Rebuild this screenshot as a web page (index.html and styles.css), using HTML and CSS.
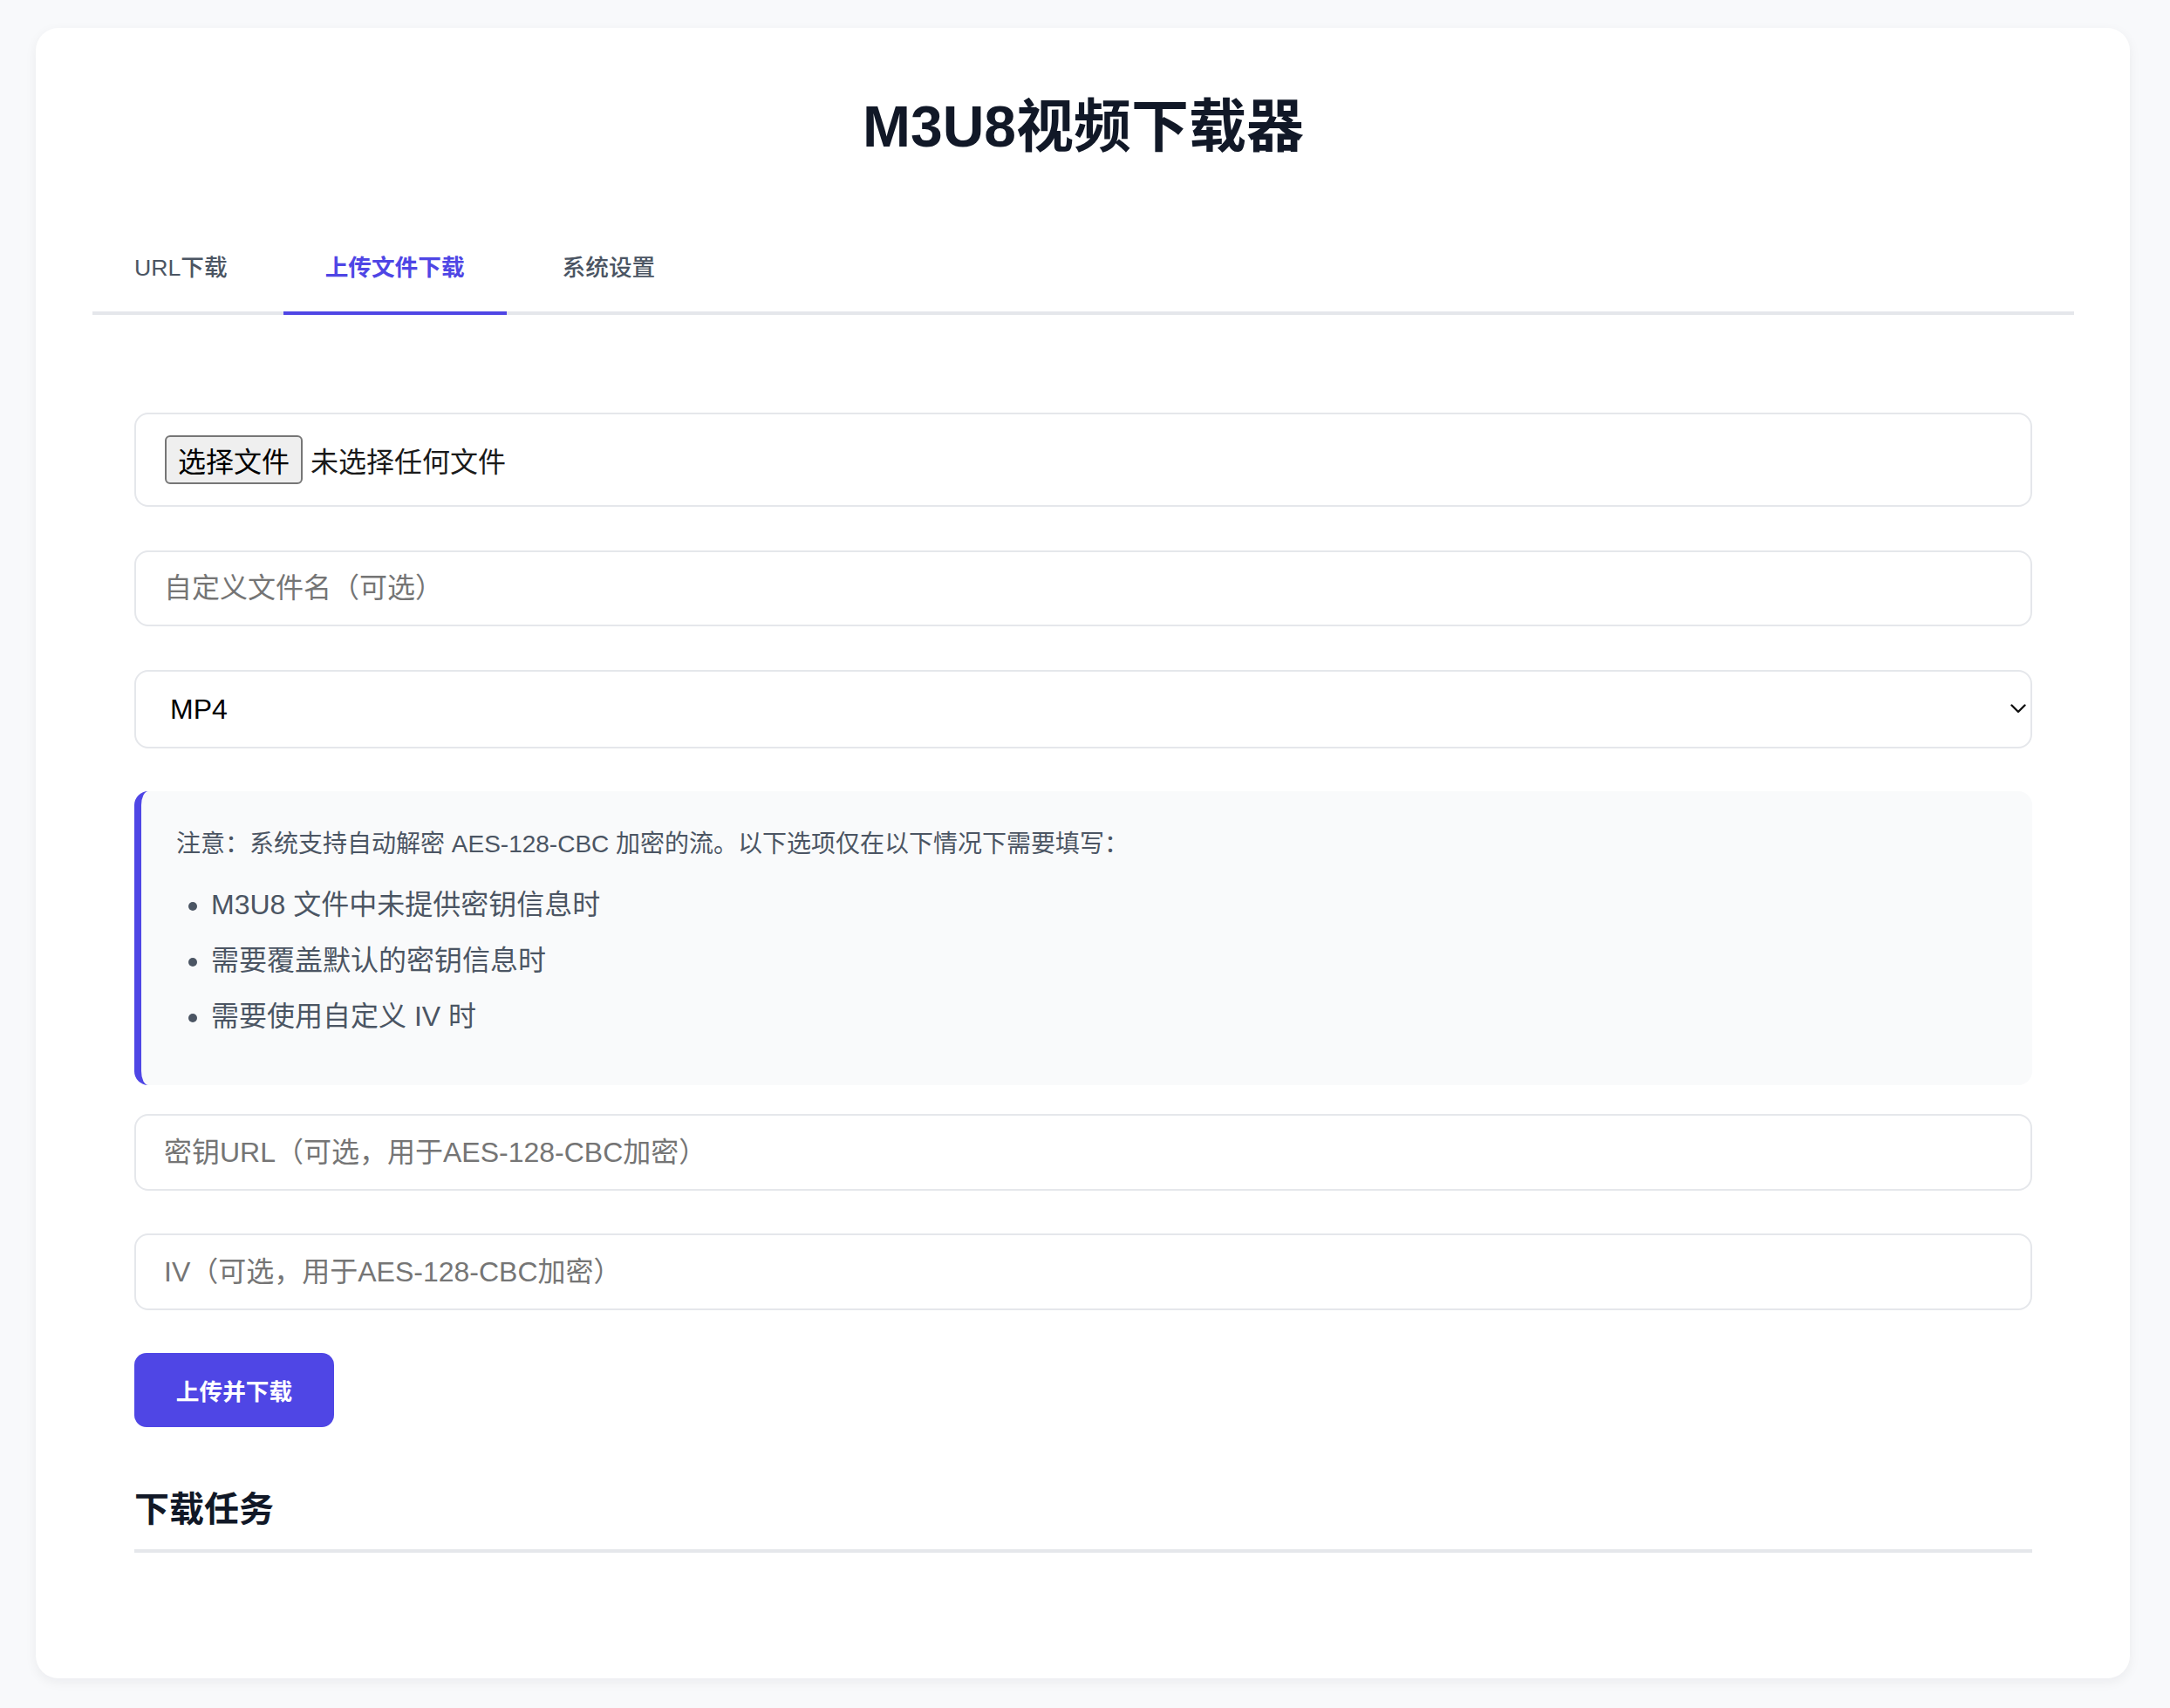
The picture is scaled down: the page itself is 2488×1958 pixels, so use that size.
FILE: index.html
```html
<!DOCTYPE html>
<html lang="zh-CN">
<head>
<meta charset="utf-8">
<title>M3U8视频下载器</title>
<link rel="stylesheet" href="styles.css">
</head>
<body>
<div class="card">
  <h1 class="title">M3U8视频下载器</h1>
  <div class="tabs">
    <button class="tab">URL下载</button>
    <button class="tab tab-active">上传文件下载</button>
    <button class="tab">系统设置</button>
  </div>
  <div class="panel">
    <div class="field file-box">
      <span class="file-btn">选择文件</span>
      <span class="file-label">未选择任何文件</span>
    </div>
    <input class="field text-input gap50" type="text" placeholder="自定义文件名（可选）">
    <div class="select-wrap">
      <select class="field select-input">
        <option>MP4</option>
      </select>
      <svg class="chevron" width="18" height="12" viewBox="0 0 18 12"><polyline points="1.5,1.5 9,9 16.5,1.5" fill="none" stroke="#111" stroke-width="2.4" stroke-linecap="round" stroke-linejoin="round"/></svg>
    </div>
    <div class="note">
      <p class="note-text">注意：系统支持自动解密 AES-128-CBC 加密的流。以下选项仅在以下情况下需要填写：</p>
      <ul class="note-list">
        <li>M3U8 文件中未提供密钥信息时</li>
        <li>需要覆盖默认的密钥信息时</li>
        <li>需要使用自定义 IV 时</li>
      </ul>
    </div>
    <input class="field text-input gap49" type="text" placeholder="密钥URL（可选，用于AES-128-CBC加密）">
    <input class="field text-input gap49" type="text" placeholder="IV（可选，用于AES-128-CBC加密）">
    <button class="primary-btn">上传并下载</button>
    <h2 class="section-title">下载任务</h2>
    <div class="tasks"></div>
  </div>
</div>
</body>
</html>
```

FILE: styles.css
```css
* { box-sizing: border-box; }

html, body {
  margin: 0;
  padding: 0;
}

body {
  background: #f8f9fb;
  font-family: "Liberation Sans", "Noto Sans CJK SC", sans-serif;
  color: #111827;
  padding: 32px 0 34px;
}

.card {
  width: 2401px;
  margin-left: 41px;
  background: #ffffff;
  border-radius: 26px;
  box-shadow: 0 4px 14px rgba(15, 23, 42, 0.06);
  padding: 67px 64px 64px 65px;
}

.title {
  margin: 0 0 64px;
  font-size: 66px;
  line-height: 92px;
  font-weight: 700;
  text-align: center;
  color: #111827;
}

.tabs {
  display: flex;
  gap: 16px;
  border-bottom: 4px solid #e5e7eb;
}

.tab {
  font-family: "Liberation Sans", "Noto Sans CJK SC", sans-serif;
  font-size: 26.67px;
  line-height: 38px;
  font-weight: 500;
  color: #4b5563;
  background: transparent;
  border: none;
  border-bottom: 4px solid transparent;
  margin-bottom: -4px;
  padding: 33px 48px 31px;
  cursor: pointer;
}

.tab-active {
  color: #4f46e5;
  font-weight: 700;
  border-bottom-color: #4f46e5;
}

.panel {
  padding: 112px 48px 0;
}

.field {
  display: block;
  width: 100%;
  border: 2px solid #e5e7eb;
  border-radius: 16px;
  background: #ffffff;
}

.file-box {
  display: flex;
  align-items: center;
  height: 108px;
  padding: 0 33px;
  margin-bottom: 50px;
}

.file-btn {
  display: inline-flex;
  align-items: center;
  justify-content: center;
  width: 158px;
  height: 56px;
  background: #efefef;
  border: 2px solid #767676;
  border-radius: 6px;
  font-size: 32px;
  color: #000000;
}

.file-label {
  margin-left: 9px;
  font-size: 32px;
  color: #1a1a1a;
}

.text-input {
  height: 87px;
  padding: 0 32px;
  font-family: "Liberation Sans", "Noto Sans CJK SC", sans-serif;
  font-size: 32px;
  color: #111827;
  outline: none;
}

.text-input::placeholder {
  color: #757575;
}

.gap50 { margin-bottom: 50px; height: 87px; }
.gap49 { margin-bottom: 49px; height: 88px; }

.select-wrap {
  position: relative;
  margin-bottom: 49px;
}

.select-input {
  height: 90px;
  padding: 0 40px 0 39px;
  font-family: "Liberation Sans", "Noto Sans CJK SC", sans-serif;
  font-size: 32px;
  color: #000000;
  appearance: none;
  -webkit-appearance: none;
  outline: none;
}

.chevron {
  position: absolute;
  right: 7px;
  top: 39px;
}

.note {
  background: #f9fafb;
  border-left: 8px solid #4f46e5;
  border-radius: 16px;
  padding: 40px;
  margin-bottom: 33px;
  height: 337px;
}

.note-text {
  margin: 0 0 24px;
  font-size: 28px;
  line-height: 42px;
  color: #4b5563;
}

.note-list {
  margin: 0;
  padding-left: 40px;
  font-size: 32px;
  line-height: 48px;
  color: #4b5563;
}

.note-list li {
  margin-bottom: 16px;
}

.primary-btn {
  display: block;
  height: 85px;
  width: 229px;
  padding: 0;
  border: none;
  border-radius: 14px;
  background: #4f46e5;
  color: #ffffff;
  font-family: "Liberation Sans", "Noto Sans CJK SC", sans-serif;
  font-size: 26.67px;
  font-weight: 700;
  cursor: pointer;
}

.section-title {
  margin: 64px 0 0;
  padding-bottom: 16px;
  border-bottom: 4px solid #e5e7eb;
  font-size: 40px;
  line-height: 60px;
  font-weight: 700;
  color: #111827;
}

.tasks {
  height: 80px;
}
```
